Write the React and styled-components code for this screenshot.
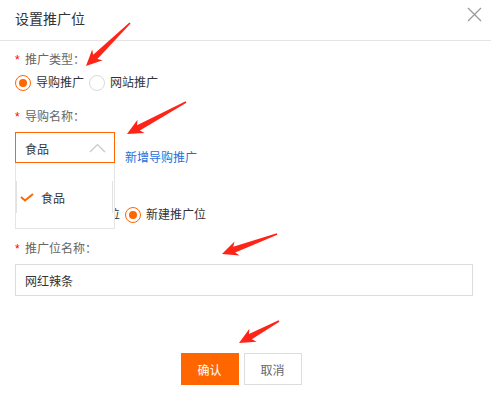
import React from "react";
import styled, { createGlobalStyle } from "styled-components";

const ORANGE = "#ff6600";

const GlobalStyle = createGlobalStyle`
  html, body {
    margin: 0;
    padding: 0;
    background: #fff;
  }
  body {
    font-family: "Liberation Sans", "Noto Sans CJK SC", sans-serif;
    font-size: 12px;
    color: #333;
  }
`;

// red annotation arrows drawn over the screenshot
const arrows = [
  { from: [130, 23], to: [86, 66] },
  { from: [186, 102], to: [127, 134] },
  { from: [277, 234], to: [222, 254] },
  { from: [279, 321], to: [239, 343] },
];

function Arrow({ from, to }) {
  const dx = to[0] - from[0];
  const dy = to[1] - from[1];
  const len = Math.sqrt(dx * dx + dy * dy);
  const deg = (Math.atan2(dy, dx) * 180) / Math.PI;
  const pts = [
    [0, -0.8],
    [len - 13, -3],
    [len - 16, -7.5],
    [len, 0],
    [len - 16, 7.5],
    [len - 13, 3],
    [0, 0.8],
  ]
    .map((p) => p.join(","))
    .join(" ");
  return (
    <polygon
      points={pts}
      fill="#ff2418"
      transform={`translate(${from[0]} ${from[1]}) rotate(${deg})`}
    />
  );
}

function Radio({ checked, children }) {
  return (
    <Option>
      <RadioDot checked={checked} />
      <span>{children}</span>
    </Option>
  );
}

function FieldLabel({ children }) {
  return (
    <Label>
      <Star>*</Star>
      {children}
    </Label>
  );
}

export default function App() {
  return (
    <>
      <GlobalStyle />
      <Dialog>
        <Header>
          <Title>设置推广位</Title>
          <Close aria-label="close">
            <svg width="15" height="15" viewBox="0 0 15 15">
              <path d="M1 1 L14 14 M14 1 L1 14" stroke="#9a9a9a" strokeWidth="1.3" fill="none" />
            </svg>
          </Close>
        </Header>

        <Body>
          <Field>
            <FieldLabel>推广类型：</FieldLabel>
            <RadioRow>
              <Radio checked>导购推广</Radio>
              <Radio>网站推广</Radio>
            </RadioRow>
          </Field>

          <Field>
            <FieldLabel>导购名称：</FieldLabel>
            <SelectRow>
              <SelectWrap>
                <Select>
                  <span>食品</span>
                  <svg width="17" height="10" viewBox="0 0 17 10">
                    <path d="M1 9 L8.5 1.5 L16 9" stroke="#c8c8c8" strokeWidth="1.2" fill="none" />
                  </svg>
                </Select>
                <Dropdown>
                  <Item>
                    <svg width="14" height="9" viewBox="0 0 14 9">
                      <path d="M1 4 L5 7.5 L13 1" stroke={ORANGE} strokeWidth="2" fill="none" />
                    </svg>
                    <span>食品</span>
                  </Item>
                </Dropdown>
              </SelectWrap>
              <Link href="#">新增导购推广</Link>
            </SelectRow>
          </Field>

          <Field>
            <FieldLabel>推广位：</FieldLabel>
            <RadioRow>
              <Radio>选择已有推广位</Radio>
              <Radio checked>新建推广位</Radio>
            </RadioRow>
          </Field>

          <Field last>
            <FieldLabel>推广位名称：</FieldLabel>
            <TextInput readOnly defaultValue="网红辣条" />
          </Field>
        </Body>

        <Footer>
          <Button primary>确认</Button>
          <Button>取消</Button>
        </Footer>

        <ArrowLayer width="491" height="401" viewBox="0 0 491 401">
          {arrows.map((a, i) => (
            <Arrow key={i} from={a.from} to={a.to} />
          ))}
        </ArrowLayer>
      </Dialog>
    </>
  );
}

const Dialog = styled.div`
  position: relative;
  width: 491px;
  height: 401px;
  background: #fff;
  overflow: hidden;
`;

const Header = styled.div`
  display: flex;
  align-items: flex-start;
  justify-content: space-between;
  height: 40px;
  padding: 0 9px 0 15px;
  border-bottom: 1px solid #e5e5e5;
`;

const Title = styled.h3`
  margin: 11px 0 0;
  font-size: 14px;
  line-height: 16px;
  font-weight: normal;
  color: #333;
`;

const Close = styled.button`
  margin-top: 7px;
  padding: 0;
  width: 15px;
  height: 15px;
  border: none;
  background: none;
  line-height: 0;
  cursor: pointer;
`;

const Body = styled.div`
  padding: 11px 18px 0 15px;
`;

const Field = styled.div`
  margin-bottom: ${(p) => (p.last ? 0 : 18)}px;
`;

const Label = styled.div`
  display: flex;
  align-items: center;
  height: 16px;
  margin-bottom: 7px;
  font-size: 12px;
  line-height: 16px;
  color: #666;
`;

const Star = styled.span`
  display: inline-block;
  width: 10px;
  color: #f00;
  font-size: 12px;
`;

const RadioRow = styled.div`
  display: flex;
  align-items: center;
  gap: 5px;
  height: 16px;
`;

const Option = styled.label`
  display: flex;
  align-items: center;
  gap: 5px;
  font-size: 12px;
  line-height: 16px;
  color: #333;
`;

const RadioDot = styled.span`
  position: relative;
  box-sizing: border-box;
  width: 16px;
  height: 16px;
  border-radius: 50%;
  border: 1px solid ${(p) => (p.checked ? ORANGE : "#d9d9d9")};
  background: #fff;

  &::after {
    content: "";
    display: ${(p) => (p.checked ? "block" : "none")};
    position: absolute;
    left: 3px;
    top: 3px;
    width: 8px;
    height: 8px;
    border-radius: 50%;
    background: ${ORANGE};
  }
`;

const SelectRow = styled.div`
  display: flex;
  align-items: flex-end;
  gap: 10px;
  height: 34px;
`;

const SelectWrap = styled.div`
  position: relative;
  align-self: flex-start;
`;

const Select = styled.div`
  box-sizing: border-box;
  display: flex;
  align-items: center;
  justify-content: space-between;
  width: 100px;
  height: 31px;
  padding: 1px 8px 0 9px;
  border: 1px solid ${ORANGE};
  font-size: 12px;
  color: #333;
`;

const Dropdown = styled.div`
  position: absolute;
  top: 31px;
  left: 0;
  z-index: 2;
  box-sizing: border-box;
  width: 100px;
  height: 66px;
  padding-top: 18px;
  background: #fff;
  border: 1px solid #e5e5e5;
  border-top: none;
`;

const Item = styled.div`
  display: flex;
  align-items: center;
  gap: 7px;
  height: 32px;
  padding-left: 3px;
  margin-right: 1px;
  border-left: 1px solid #e2e2e2;
  border-right: 1px solid #e2e2e2;
  font-size: 12px;
  color: #333;
`;

const Link = styled.a`
  font-size: 12px;
  line-height: 16px;
  color: #1e6fd9;
  text-decoration: none;
`;

const TextInput = styled.input`
  box-sizing: border-box;
  display: block;
  width: 100%;
  height: 32px;
  padding: 0 9px;
  border: 1px solid #ddd;
  outline: none;
  font-family: "Liberation Sans", "Noto Sans CJK SC", sans-serif;
  font-size: 12px;
  color: #333;
`;

const Footer = styled.div`
  display: flex;
  justify-content: center;
  gap: 5px;
  padding: 57px 9px 0 0;
`;

const Button = styled.button`
  box-sizing: border-box;
  width: 58px;
  height: 32px;
  padding: 0;
  border: 1px solid ${(p) => (p.primary ? ORANGE : "#ddd")};
  background: ${(p) => (p.primary ? ORANGE : "#fff")};
  color: ${(p) => (p.primary ? "#fff" : "#666")};
  font-family: "Liberation Sans", "Noto Sans CJK SC", sans-serif;
  font-size: 12px;
  cursor: pointer;
`;

const ArrowLayer = styled.svg`
  position: absolute;
  left: 0;
  top: 0;
  z-index: 5;
  pointer-events: none;
`;
